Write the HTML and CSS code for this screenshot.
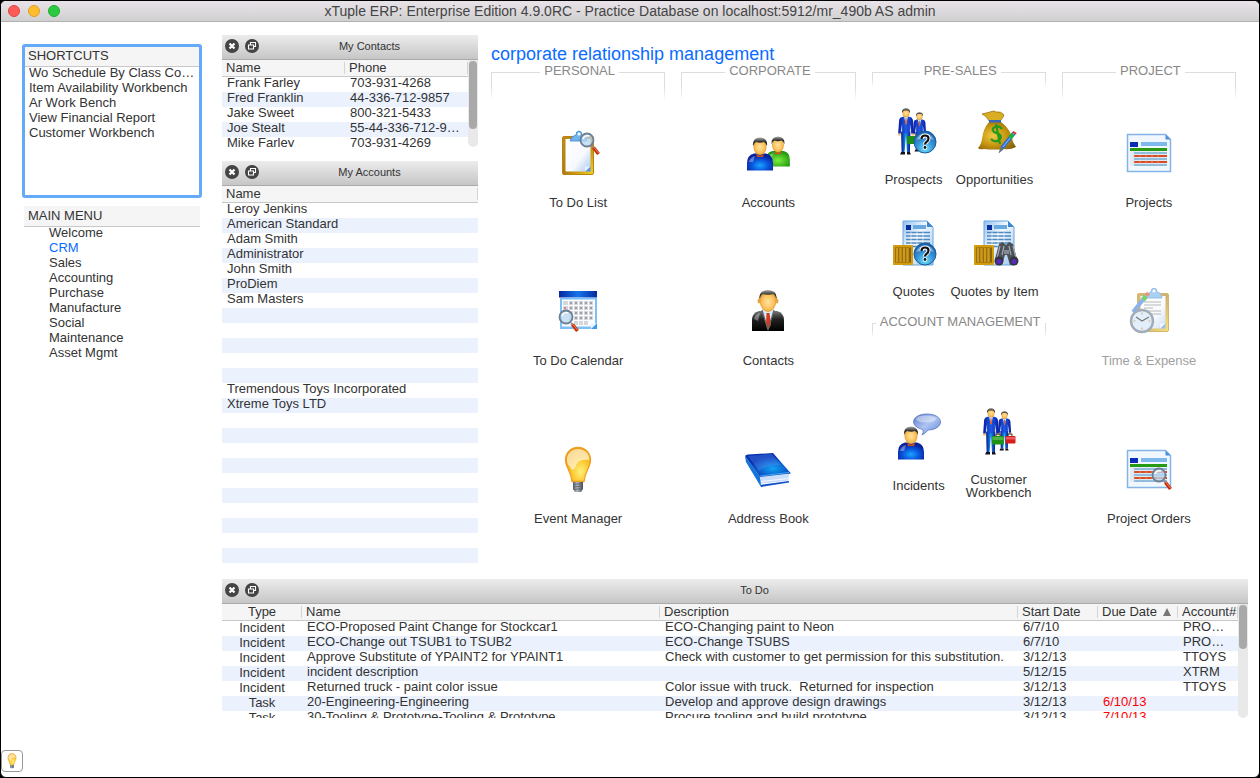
FILE: index.html
```
<!DOCTYPE html>
<html lang="en">
<head>
    <meta charset="UTF-8">
    <meta name="viewport" content="width=device-width, initial-scale=1.0">
    <title>xTuple ERP: Enterprise Edition</title>
    <link rel="stylesheet" href="styles.css">
</head>
<body>
    <!-- Icon sprite -->
    <svg class="sprite" aria-hidden="true">
        <defs>
            <radialGradient id="blue" cx="0.5" cy="0.7" r="0.6">
                <stop offset="0" stop-color="#1aa5ff"/><stop offset="0.5" stop-color="#0a5be0"/><stop offset="1" stop-color="#0a1f9c"/>
            </radialGradient>
            <radialGradient id="green" cx="0.5" cy="0.6" r="0.6">
                <stop offset="0" stop-color="#7af03c"/><stop offset="1" stop-color="#1f9410"/>
            </radialGradient>
            <radialGradient id="skin" cx="0.5" cy="0.5" r="0.6">
                <stop offset="0" stop-color="#ffe3a0"/><stop offset="0.6" stop-color="#fbc25c"/><stop offset="1" stop-color="#cf8018"/>
            </radialGradient>
            <linearGradient id="hair" x1="0" y1="0" x2="0" y2="1">
                <stop offset="0" stop-color="#aaa"/><stop offset="0.5" stop-color="#333"/><stop offset="1" stop-color="#000"/>
            </linearGradient>
            <linearGradient id="gold" x1="0" y1="0" x2="1" y2="1">
                <stop offset="0" stop-color="#c48a18"/><stop offset="0.5" stop-color="#b07c10"/><stop offset="1" stop-color="#f5d21c"/>
            </linearGradient>
            <linearGradient id="paper" x1="0" y1="0" x2="1" y2="1">
                <stop offset="0" stop-color="#fff"/><stop offset="0.6" stop-color="#f6f9ff"/><stop offset="1" stop-color="#a9c6ee"/>
            </linearGradient>
            <linearGradient id="suit" x1="0" y1="0" x2="1" y2="0">
                <stop offset="0" stop-color="#0a1ba0"/><stop offset="0.5" stop-color="#1d5be6"/><stop offset="1" stop-color="#0a1ba0"/>
            </linearGradient>
            <linearGradient id="legs" x1="0" y1="0" x2="1" y2="0">
                <stop offset="0" stop-color="#06128a"/><stop offset="0.5" stop-color="#1597ee"/><stop offset="1" stop-color="#06128a"/>
            </linearGradient>
            <radialGradient id="ball" cx="0.5" cy="0.8" r="0.7">
                <stop offset="0" stop-color="#6fe4fa"/><stop offset="0.5" stop-color="#3a97da"/><stop offset="1" stop-color="#1a64ae"/>
            </radialGradient>
            <radialGradient id="bag" cx="0.4" cy="0.5" r="0.7">
                <stop offset="0" stop-color="#efcb48"/><stop offset="0.5" stop-color="#c8960f"/><stop offset="1" stop-color="#805a08"/>
            </radialGradient>
            <linearGradient id="sheet" x1="0" y1="0" x2="1" y2="1">
                <stop offset="0" stop-color="#8fc0f0"/><stop offset="0.4" stop-color="#f2f8ff"/><stop offset="1" stop-color="#9cc8f2"/>
            </linearGradient>
            <linearGradient id="navy" x1="0" y1="0" x2="1" y2="0">
                <stop offset="0" stop-color="#0628a0"/><stop offset="0.5" stop-color="#1475e8"/><stop offset="1" stop-color="#0628a0"/>
            </linearGradient>
            <linearGradient id="black" x1="0" y1="0" x2="0" y2="1">
                <stop offset="0" stop-color="#777"/><stop offset="0.4" stop-color="#222"/><stop offset="1" stop-color="#000"/>
            </linearGradient>
            <radialGradient id="glow" cx="0.6" cy="0.7" r="0.7">
                <stop offset="0" stop-color="#fff27a"/><stop offset="0.5" stop-color="#fcc62f"/><stop offset="1" stop-color="#ee9708"/>
            </radialGradient>
            <linearGradient id="metal" x1="0" y1="0" x2="1" y2="0">
                <stop offset="0" stop-color="#555b66"/><stop offset="0.4" stop-color="#b5bac4"/><stop offset="1" stop-color="#444a55"/>
            </linearGradient>
            <radialGradient id="cover" cx="0.6" cy="0.65" r="0.5">
                <stop offset="0" stop-color="#11a2f5"/><stop offset="1" stop-color="#0633b0"/>
            </radialGradient>
            <linearGradient id="bubble" x1="0" y1="0" x2="1" y2="1">
                <stop offset="0" stop-color="#5a78c8"/><stop offset="0.5" stop-color="#aec4f2"/><stop offset="1" stop-color="#5f84d8"/>
            </linearGradient>
        </defs>

        <symbol id="magnifier" viewBox="0 0 24 28">
            <path d="M14 15l2 2" stroke="#888" stroke-width="2"/>
            <path d="M15.500 16.500l5 6.500" stroke="#c8300c" stroke-width="3.500"/>
            <path d="M15.500 16l5 6" stroke="#f08050" stroke-width="1"/>
            <circle cx="9" cy="9" r="6.500" fill="#b9d8f2" fill-opacity="0.750" stroke="#6d7f92" stroke-width="1.800"/>
            <path d="M5 8a4.500 4.500 0 0 1 6-3" stroke="#fff" stroke-width="1.500" fill="none"/>
        </symbol>

        <symbol id="bust" viewBox="0 0 26 34">
            <path d="M0 33.500V26q0-8 7-9.500h12q7 1.500 7 9.500v7.500z"/>
            <path d="M9 17q4 3 8 0l-1 3h-6z" fill="#d0501c"/>
            <path d="M2 25q1-5 6-6l-2 6z" fill="#fff" opacity="0.350"/>
            <ellipse cx="13" cy="10" rx="6.500" ry="8" fill="url(#skin)"/>
            <path d="M6 9q-1-8 7-8.500 8 .5 7 8.500-1-3-3-4-4 1.500-8 0-2 1-3 4z" fill="url(#hair)"/>
        </symbol>

        <symbol id="suitman" viewBox="0 0 18 48">
            <path d="M4 24h9.500l-.5 21h-3l-1-17-1.500 17H4.500z" fill="url(#legs)"/>
            <path d="M4 45h4v2.500H3zM10 45h3l1 2.500h-4z" fill="#112"/>
            <path d="M1 26l1-14q.5-2.500 3.500-3h7q3 .5 3.500 3l1 14-2.500.5L13 16v10H5V16l-1.500 10.500z" fill="url(#suit)"/>
            <path d="M7 9h4l-2 8z" fill="#cfeaff"/>
            <path d="M8.500 10.500h1l.5 5-1 1.500-1-1.500z" fill="#e0602a"/>
            <path d="M1 26h2.500v2H1zM14.500 26H17v2h-2.500z" fill="#f2b660"/>
            <ellipse cx="9" cy="5" rx="3.500" ry="4.500" fill="url(#skin)"/>
            <path d="M5 5q-.5-4.500 4-5 4.500.5 4 5l-1.500-2.500h-5z" fill="url(#hair)"/>
        </symbol>

        <symbol id="question" viewBox="0 0 24 24">
            <circle cx="12" cy="12" r="11" fill="url(#ball)" stroke="#1b5c9c" stroke-width="1"/>
            <path d="M3 10a9.500 9.500 0 0 1 18 0q-9-3-18 0z" fill="#fff" opacity="0.350"/>
            <path d="M8.500 9q0-3.500 3.500-3.500t3.500 3q0 2-1.700 3.200t-1.800 2.800" fill="none" stroke="#fff" stroke-width="4"/>
            <path d="M8.500 9q0-3.500 3.500-3.500t3.500 3q0 2-1.700 3.200t-1.800 2.800" fill="none" stroke="#111" stroke-width="2.200"/>
            <circle cx="12" cy="17.500" r="2.200" fill="#fff"/><circle cx="12" cy="17.500" r="1.400" fill="#111"/>
        </symbol>

        <symbol id="clipboard" viewBox="0 0 34 46">
            <rect x="1.500" y="6.500" width="31" height="38" rx="1.500" fill="url(#gold)" stroke="#b98512"/>
            <path d="M4.500 9h25v32.500h-25z" fill="url(#paper)"/>
            <path d="M24 41.500l5.500-5.500v5.500z" fill="#5f92d8"/><path d="M24 41.500v-5h5.500z" fill="#e8f1ff"/>
            <path d="M9 11q1-5 6-6 0-4 3-4t3 4q5 1 5 6z" fill="#6fb4ec" stroke="#3f88cc" stroke-width="0.800"/>
            <circle cx="18" cy="4" r="1.500" fill="#fff"/>
        </symbol>

        <symbol id="bluedoc" viewBox="0 0 32 46">
            <path d="M1 1h24l6 6v38H1z" fill="url(#sheet)" stroke="#6aa5dc"/>
            <path d="M25 1v6h6z" fill="#3d88d0"/>
            <path d="M4 5h5v5H4z" fill="#0a2c9c"/><path d="M11 5h13v4H11z" fill="#6aa8e0"/>
            <path d="M4 12.500h24M4 16h24M4 19.500h24M4 23h24M4 26.500h24" stroke="#4d88bf" stroke-width="1.500"/>
            <path d="M9 12v15M15 12v15M21 12v15" stroke="#fff" stroke-width="0.600"/>
        </symbol>

        <symbol id="crate" viewBox="0 0 20 20">
            <path d="M0 0h20v20H0z" fill="#b07d0a"/>
            <path d="M2 3h16v14H2z" fill="#8a620a"/>
            <path d="M4 3v14M7.500 3v14M11 3v14M14.500 3v14" stroke="#cc9a1c" stroke-width="2.500"/>
            <path d="M0 1h20M1 0v20M19 0v20M0 19h20" stroke="#d9a614" stroke-width="1.600"/>
        </symbol>

        <symbol id="report" viewBox="0 0 46 40">
            <path d="M1.500 1.500h38l5 5v32h-43z" fill="#f1f7ff" stroke="#86b4e6" stroke-width="1.500"/>
            <path d="M39.500 1.500v5h5z" fill="#4a90d8"/>
            <path d="M4 9h8v5H4z" fill="#0a2cb4"/><path d="M15 9h26v4H15z" fill="#7db9ea"/>
            <path d="M4 15h37v3H4z" fill="#279a12"/>
            <path d="M4 18.500h37v14H4z" fill="#e2eaf2"/>
            <path d="M8 20h33M8 26h33M8 32h33" stroke="#8fbbdc" stroke-width="1.800"/>
            <path d="M8 23h33M8 29h33" stroke="#dc4a22" stroke-width="2"/>
            <path d="M8 18v14.500M14 18v14.500M20 18v14.500M26 18v14.500M32 18v14.500" stroke="#c4d0dc" stroke-width="0.500"/>
        </symbol>

        <symbol id="icon-todo" viewBox="0 0 48 48">
            <use href="#clipboard" x="7" y="0" width="34" height="46"/>
            <use href="#magnifier" x="24" y="1" width="24" height="28"/>
        </symbol>
        <symbol id="icon-calendar" viewBox="0 0 48 48">
            <path d="M6 10h37v31H6z" fill="#7cc0f4"/><path d="M8 11.500h33v27H8z" fill="#fafcff"/>
            <path d="M5 3h38v6.500H5z" fill="url(#navy)"/>
            <g fill="#d4d6da"><path d="M9 13h5v4H9zM15 13h4v4h-4zM20 13h4v4h-4zM25 13h4v4h-4zM30 13h4v4h-4zM35 13h4v4h-4zM9 18h5v4H9zM15 18h4v4h-4zM20 18h4v4h-4zM25 18h4v4h-4zM30 18h4v4h-4zM35 18h4v4h-4zM9 23h5v4H9zM15 23h4v4h-4zM20 23h4v4h-4zM25 23h4v4h-4zM30 23h4v4h-4zM35 23h4v4h-4zM15 28h4v4h-4zM20 28h4v4h-4zM25 28h4v4h-4zM30 28h4v4h-4zM35 28h4v4h-4zM20 33h4v4h-4zM25 33h4v4h-4zM30 33h4v4h-4z"/></g>
            <path d="M17 14v2M22 14v2M27 14v2M32 14v2M37 14v2M17 19v2M22 19v2M27 19v2M32 19v2M37 19v2M17 24v2M22 24v2M27 24v2M32 24v2M37 24v2M22 29v2M27 29v2M32 29v2M37 29v2" stroke="#667" stroke-width="1"/>
            <path d="M11 19v2M11 24v2" stroke="#d33" stroke-width="1"/>
            <path d="M37 41l6-6v6z" fill="#3d9ae8"/><path d="M37 41v-5l6-1z" fill="#e6f3ff"/>
            <use href="#magnifier" x="3" y="20" width="24" height="28"/>
        </symbol>
        <symbol id="icon-bulb" viewBox="0 0 48 48">
            <path d="M24 1.500c7.500 0 12.500 5.500 12.500 12.500 0 7-5.500 11-6.500 21.500H18C17 25 11.500 21 11.500 14 11.500 7 16.500 1.500 24 1.500z" fill="url(#glow)" stroke="#eba023" stroke-width="1.300"/>
            <path d="M13 16C12 8 17 3 24 3s12 5 11 11q-12-2-14 8-3 4-5-1-2-2-3-5z" fill="#fff6dc" opacity="0.700"/>
            <path d="M19 36h10v7l-2 3h-6l-2-3z" fill="url(#metal)"/>
            <path d="M19 38.500l10-1M19 41l10-1M19.500 43.500l9-1" stroke="#555b66" stroke-width="0.800"/>
        </symbol>
        <symbol id="icon-accounts" viewBox="0 0 48 48">
            <use href="#bust" x="22" y="6" width="24" height="31" fill="url(#green)"/>
            <use href="#bust" x="3" y="7" width="26" height="34" fill="url(#blue)"/>
        </symbol>
        <symbol id="icon-contact" viewBox="0 0 48 48">
            <path d="M8 43V32q0-7 7-9h18q7 2 7 9v11z" fill="url(#black)"/>
            <path d="M18 22h12l-6 19z" fill="#d8edfa"/>
            <path d="M22.500 25h3l1.500 12-2.500 4-2.500-4z" fill="#d8371c"/>
            <path d="M18 22l6 20M30 22l-6 20" stroke="#666" stroke-width="1.200"/>
            <path d="M10 31q1-5 6-6l-2 8z" fill="#fff" opacity="0.350"/>
            <ellipse cx="15" cy="13" rx="1.500" ry="2.500" fill="#e8a840"/><ellipse cx="33" cy="13" rx="1.500" ry="2.500" fill="#e8a840"/>
            <path d="M15.500 11q0-7 8.500-7t8.500 7q0 6-3 10-2.500 3-5.500 3t-5.500-3q-3-4-3-10z" fill="url(#skin)"/>
            <path d="M15.500 11q-1-8.500 8.500-9 9.500.5 8.500 9-1-4-3-5-5.500 1.500-11 0-2 1-3 5z" fill="url(#hair)"/>
        </symbol>
        <symbol id="icon-book" viewBox="0 0 48 48">
            <path d="M1 10l1 6 15 25 2-1-3-9z" fill="#1273d8"/>
            <path d="M16 31l29-3-1 8-27 4z" fill="#c9dcfb"/>
            <path d="M17 38l28-3M17 35.500l27-3" stroke="#fff" stroke-width="0.800"/>
            <path d="M17 41l28-4.500v-1.500l-28 4z" fill="#0f50c8"/>
            <path d="M1 10q1-1.500 3-1.500L29 7l18 20.500-31 3.500z" fill="url(#cover)"/>
            <path d="M4 10l24-2 9 11q-14 0-22 6z" fill="#7aa4ff" opacity="0.250"/>
            <path d="M16 30l29-3.500" stroke="#56b4f8" stroke-width="0.800"/>
        </symbol>
        <symbol id="icon-prospects" viewBox="0 0 48 48">
            <use href="#suitman" x="22" y="5" width="15" height="40"/>
            <use href="#suitman" x="7" y="1" width="18" height="47"/>
            <rect x="17" y="29" width="12" height="8" rx="1" fill="#1e8a18"/>
            <use href="#question" x="23" y="23" width="24" height="24"/>
        </symbol>
        <symbol id="icon-opportunities" viewBox="0 0 48 48">
            <path d="M18 15h12q10 7 12 20l3 5q-6 3-12 2-10 1-20 0-5 1-6-1 3-3 4-9 1-10 7-17z" fill="url(#bag)"/>
            <path d="M11 7q4-1 8-2 4-2 6 0 5-1 8 3-1 3-4 6H18q-2-5-7-7z" fill="#d9ae22" stroke="#94690a" stroke-width="0.700"/>
            <path d="M18 13h12v2.500H18z" fill="#3a66b8"/>
            <path d="M31 22q-3-4-7-2t-1 5l5 2q4 3 0 6t-8-1M25 17l4 20" fill="none" stroke="#259a1c" stroke-width="2.200"/>
            <path d="M43 26L31 41" stroke="#2f6fd0" stroke-width="4"/>
            <path d="M43 26L32 40" stroke="#8cc0ff" stroke-width="1"/>
            <path d="M42 27l-3 4" stroke="#20b040" stroke-width="4"/><path d="M44 25l-1 1.500" stroke="#e03030" stroke-width="4"/>
            <path d="M29.500 40l3 2.500-5 4z" fill="#6b7078"/>
        </symbol>
        <symbol id="icon-quotes" viewBox="0 0 48 48">
            <use href="#bluedoc" x="12" y="1" width="32" height="46"/>
            <use href="#crate" x="3" y="26" width="20" height="20"/>
            <use href="#question" x="23" y="23" width="24" height="24"/>
        </symbol>
        <symbol id="icon-quotes-item" viewBox="0 0 48 48">
            <use href="#bluedoc" x="12" y="1" width="32" height="46"/>
            <use href="#crate" x="3" y="26" width="20" height="20"/>
            <path d="M28 25l4-2 3 3 3-3 4 2 4 15-2 6h-5l-3-10h-2l-3 10h-5l-2-6z" fill="#4c5158"/>
            <path d="M29 27l-3 12M42 27l3 12M33 27l-2 9M38 27l2 9" stroke="#a5abb5" stroke-width="1.200"/>
            <path d="M33 31h5v4h-5z" fill="#858b95"/>
            <circle cx="28" cy="42" r="4.500" fill="#33363c"/><circle cx="43" cy="42" r="4.500" fill="#33363c"/>
            <circle cx="28" cy="42.500" r="2.500" fill="#5a28c0"/><circle cx="43" cy="42.500" r="2.500" fill="#5a28c0"/>
        </symbol>
        <symbol id="icon-incidents" viewBox="0 0 48 48">
            <path d="M32 1c8 0 13.500 3.500 13.500 8S40 17 33 17q-2 3-6 5 2-3 1-5.500-9-2-9.500-7.500C18.500 4.500 24 1 32 1z" fill="url(#bubble)" stroke="#5474c4" stroke-width="0.800"/>
            <ellipse cx="31" cy="6" rx="10" ry="3.500" fill="#fff" opacity="0.400"/>
            <use href="#bust" x="3" y="13" width="26" height="34" fill="url(#blue)"/>
        </symbol>
        <symbol id="icon-workbench" viewBox="0 0 48 48">
            <use href="#suitman" x="22" y="4" width="15" height="40"/>
            <use href="#suitman" x="7" y="1" width="18" height="47"/>
            <path d="M21 29v-2h4v2M33 29v-2h4v2" fill="none" stroke="#333"/>
            <rect x="17" y="29" width="12" height="8.500" rx="1" fill="#1f9318"/><path d="M17.500 30h11v3h-11z" fill="#7fd070" opacity="0.500"/>
            <rect x="30.500" y="29" width="10" height="7.500" rx="1" fill="#d81c1c"/><path d="M31 30h9v2.500h-9z" fill="#ff9a90" opacity="0.500"/>
        </symbol>
        <symbol id="icon-projects" viewBox="0 0 48 48">
            <use href="#report" x="1" y="3" width="46" height="40"/>
        </symbol>
        <symbol id="icon-orders" viewBox="0 0 48 48">
            <use href="#report" x="1" y="3" width="46" height="40"/>
            <use href="#magnifier" x="25" y="20" width="24" height="28"/>
        </symbol>
        <symbol id="icon-time" viewBox="0 0 48 48">
            <g opacity="0.600">
                <use href="#clipboard" x="11" y="-1" width="34" height="46"/>
                <path d="M19 14h17M19 17h17M19 20h9M19 23h17M19 26h17" stroke="#888" stroke-width="1"/>
                <path d="M21 8L8 24" stroke="#3f7fe0" stroke-width="4"/><path d="M21 8l-3 4" stroke="#28b428" stroke-width="5"/>
                <path d="M23.500 5l-2 2.500" stroke="#e04a30" stroke-width="4"/>
                <circle cx="17" cy="33" r="11" fill="#cfe6fa" stroke="#66788c" stroke-width="2.500"/>
                <path d="M11 29l6 4 7-4" fill="none" stroke="#222" stroke-width="1.300"/>
                <path d="M17 24.500v2M17 39.500v2M8.500 33h2M23.500 33h2" stroke="#c07830" stroke-width="1.200"/>
            </g>
        </symbol>
        <symbol id="dock-close" viewBox="0 0 14 14">
            <circle cx="7" cy="7" r="7" fill="#444"/>
            <path d="M4.500 4.500l5 5M9.500 4.500l-5 5" stroke="#fff" stroke-width="2.200"/>
        </symbol>
        <symbol id="dock-float" viewBox="0 0 14 14">
            <circle cx="7" cy="7" r="7" fill="#444"/>
            <path d="M5.500 5.500v-2h5v4h-2M3.500 6h5v4h-5z" fill="none" stroke="#fff" stroke-width="1.100"/>
        </symbol>
    </svg>

    <header class="titlebar">
        <div class="lights">
            <button class="light close" aria-label="Close"></button>
            <button class="light minimize" aria-label="Minimize"></button>
            <button class="light zoom" aria-label="Zoom"></button>
        </div>
        <span class="window-title">xTuple ERP: Enterprise Edition 4.9.0RC - Practice Database on localhost:5912/mr_490b AS admin</span>
    </header>

    <div class="workspace">
        <aside class="sidebar">
            <nav class="shortcuts">
                <h2>SHORTCUTS</h2>
                <ul>
                    <li><a href="#" class="elide">Wo Schedule By Class Code</a></li>
                    <li><a href="#">Item Availability Workbench</a></li>
                    <li><a href="#">Ar Work Bench</a></li>
                    <li><a href="#">View Financial Report</a></li>
                    <li><a href="#">Customer Workbench</a></li>
                </ul>
            </nav>
            <nav class="main-menu">
                <h2>MAIN MENU</h2>
                <ul>
                    <li><a href="#">Welcome</a></li>
                    <li><a href="#" class="active">CRM</a></li>
                    <li><a href="#">Sales</a></li>
                    <li><a href="#">Accounting</a></li>
                    <li><a href="#">Purchase</a></li>
                    <li><a href="#">Manufacture</a></li>
                    <li><a href="#">Social</a></li>
                    <li><a href="#">Maintenance</a></li>
                    <li><a href="#">Asset Mgmt</a></li>
                </ul>
            </nav>
        </aside>

        <div class="docks">
            <section class="dock contacts">
                <div class="dock-title">
                    <button aria-label="Close"><svg><use href="#dock-close"/></svg></button>
                    <button aria-label="Float"><svg><use href="#dock-float"/></svg></button>
                    <h2>My Contacts</h2>
                </div>
                <div class="dock-body">
                    <div class="list">
                        <table>
                            <thead><tr><th>Name</th><th>Phone</th></tr></thead>
                            <tbody>
                                <tr><td>Frank Farley</td><td>703-931-4268</td></tr>
                                <tr><td>Fred Franklin</td><td>44-336-712-9857</td></tr>
                                <tr><td>Jake Sweet</td><td>800-321-5433</td></tr>
                                <tr><td>Joe Stealt</td><td class="elide">55-44-336-712-9857</td></tr>
                                <tr><td>Mike Farley</td><td>703-931-4269</td></tr>
                            </tbody>
                        </table>
                    </div>
                    <div class="scrollbar"><div class="thumb"></div></div>
                </div>
            </section>

            <section class="dock accounts">
                <div class="dock-title">
                    <button aria-label="Close"><svg><use href="#dock-close"/></svg></button>
                    <button aria-label="Float"><svg><use href="#dock-float"/></svg></button>
                    <h2>My Accounts</h2>
                </div>
                <div class="dock-body">
                    <div class="list">
                        <table>
                            <thead><tr><th>Name</th></tr></thead>
                            <tbody>
                                <tr><td>Leroy Jenkins</td></tr>
                                <tr><td>American Standard</td></tr>
                                <tr><td>Adam Smith</td></tr>
                                <tr><td>Administrator</td></tr>
                                <tr><td>John Smith</td></tr>
                                <tr><td>ProDiem</td></tr>
                                <tr><td>Sam Masters</td></tr>
                                <tr><td></td></tr>
                                <tr><td></td></tr>
                                <tr><td></td></tr>
                                <tr><td></td></tr>
                                <tr><td></td></tr>
                                <tr><td>Tremendous Toys Incorporated</td></tr>
                                <tr><td>Xtreme Toys LTD</td></tr>
                                <tr><td></td></tr>
                                <tr><td></td></tr>
                                <tr><td></td></tr>
                                <tr><td></td></tr>
                                <tr><td></td></tr>
                                <tr><td></td></tr>
                                <tr><td></td></tr>
                                <tr><td></td></tr>
                                <tr><td></td></tr>
                                <tr><td></td></tr>
                            </tbody>
                        </table>
                    </div>
                </div>
            </section>
        </div>

        <main class="crm">
            <h1>corporate relationship management</h1>
            <div class="groups">
                <section class="group">
                    <h3>PERSONAL</h3>
                    <div class="stack">
                        <button class="tile"><svg><use href="#icon-todo"/></svg>To Do List</button>
                        <button class="tile"><svg><use href="#icon-calendar"/></svg>To Do Calendar</button>
                        <button class="tile"><svg><use href="#icon-bulb"/></svg>Event Manager</button>
                    </div>
                </section>
                <section class="group">
                    <h3>CORPORATE</h3>
                    <div class="stack">
                        <button class="tile"><svg><use href="#icon-accounts"/></svg>Accounts</button>
                        <button class="tile"><svg><use href="#icon-contact"/></svg>Contacts</button>
                        <button class="tile"><svg><use href="#icon-book"/></svg>Address Book</button>
                    </div>
                </section>
                <div class="group-column">
                    <section class="group short">
                        <h3>PRE-SALES</h3>
                        <div class="pairs">
                            <button class="tile"><svg><use href="#icon-prospects"/></svg>Prospects</button>
                            <button class="tile"><svg><use href="#icon-opportunities"/></svg>Opportunities</button>
                            <button class="tile"><svg><use href="#icon-quotes"/></svg>Quotes</button>
                            <button class="tile"><svg><use href="#icon-quotes-item"/></svg>Quotes by Item</button>
                        </div>
                    </section>
                    <section class="group short management">
                        <h3>ACCOUNT MANAGEMENT</h3>
                        <div class="pairs even">
                            <button class="tile"><svg><use href="#icon-incidents"/></svg>Incidents</button>
                            <button class="tile"><svg><use href="#icon-workbench"/></svg>Customer<br>Workbench</button>
                        </div>
                    </section>
                </div>
                <section class="group">
                    <h3>PROJECT</h3>
                    <div class="stack">
                        <button class="tile"><svg><use href="#icon-projects"/></svg>Projects</button>
                        <button class="tile" disabled><svg><use href="#icon-time"/></svg>Time &amp; Expense</button>
                        <button class="tile"><svg><use href="#icon-orders"/></svg>Project Orders</button>
                    </div>
                </section>
            </div>
        </main>

        <section class="dock todo">
            <div class="dock-title">
                <button aria-label="Close"><svg><use href="#dock-close"/></svg></button>
                <button aria-label="Float"><svg><use href="#dock-float"/></svg></button>
                <h2>To Do</h2>
            </div>
            <div class="dock-body">
                <div class="list">
                    <table>
                        <thead>
                            <tr>
                                <th class="type">Type</th>
                                <th>Name</th>
                                <th>Description</th>
                                <th class="date">Start Date</th>
                                <th class="date">Due Date <span class="sort"></span></th>
                                <th class="account">Account#</th>
                            </tr>
                        </thead>
                        <tbody>
                            <tr><td class="type">Incident</td><td>ECO-Proposed Paint Change for Stockcar1</td><td>ECO-Changing paint to Neon</td><td>6/7/10</td><td></td><td class="elide">PRODIEM</td></tr>
                            <tr><td class="type">Incident</td><td>ECO-Change out TSUB1 to TSUB2</td><td>ECO-Change TSUBS</td><td>6/7/10</td><td></td><td class="elide">PRODIEM</td></tr>
                            <tr><td class="type">Incident</td><td>Approve Substitute of YPAINT2 for YPAINT1</td><td>Check with customer to get permission for this substitution.</td><td>3/12/13</td><td></td><td>TTOYS</td></tr>
                            <tr><td class="type">Incident</td><td>incident description</td><td></td><td>5/12/15</td><td></td><td>XTRM</td></tr>
                            <tr><td class="type">Incident</td><td>Returned truck - paint color issue</td><td>Color issue with truck.&nbsp; Returned for inspection</td><td>3/12/13</td><td></td><td>TTOYS</td></tr>
                            <tr><td class="type">Task</td><td>20-Engineering-Engineering</td><td>Develop and approve design drawings</td><td>3/12/13</td><td class="overdue">6/10/13</td><td></td></tr>
                            <tr><td class="type">Task</td><td>30-Tooling &amp; Prototype-Tooling &amp; Prototype</td><td>Procure tooling and build prototype</td><td>3/12/13</td><td class="overdue">7/10/13</td><td></td></tr>
                        </tbody>
                    </table>
                </div>
                <div class="scrollbar"><div class="thumb"></div></div>
            </div>
        </section>
    </div>

    <footer class="statusbar">
        <button aria-label="Events"><svg><use href="#icon-bulb"/></svg></button>
    </footer>
</body>
</html>
```
FILE: styles.css
```
* {
    box-sizing: border-box;
}

html {
    background: #000;
}

body {
    margin: 0;
    min-height: 100vh;
    display: flex;
    flex-direction: column;
    border: 1px solid #000;
    border-radius: 6px;
    background: #fff;
    color: #333;
    font-family: "Liberation Sans", Arial, Helvetica, sans-serif;
    font-size: 13px;
    overflow: hidden;
}

h1, h2, h3, ul {
    margin: 0;
    padding: 0;
    font-weight: normal;
    list-style: none;
}

button {
    padding: 0;
    border: none;
    background: none;
    color: inherit;
    font: inherit;
}

a {
    color: inherit;
    text-decoration: none;
}

.elide {
    overflow-x: clip;
    text-overflow: ellipsis;
}

.sprite {
    position: absolute;
    width: 0;
    height: 0;
}

/* Title bar */
.titlebar {
    display: flex;
    align-items: center;
    height: 21px;
    padding: 0 7px;
    border-bottom: 1px solid #b0b0b0;
    background: linear-gradient(#e9e3e9, #d0d0d0);
}

.lights {
    display: flex;
    gap: 8px;
}

.light {
    width: 12px;
    height: 12px;
    border-radius: 50%;
}

.close {
    background: #fc5b57;
    border: 1px solid #e2443f;
}

.minimize {
    background: #fdbd2f;
    border: 1px solid #e0a023;
}

.zoom {
    background: #2bca42;
    border: 1px solid #1dad2d;
}

.window-title {
    flex: 1;
    margin-right: 52px;
    text-align: center;
    color: #444;
    font-size: 14px;
    line-height: 20px;
    white-space: nowrap;
}

.workspace {
    display: grid;
    grid-template-columns: 180px 256px 1fr;
    column-gap: 20px;
    row-gap: 15px;
    padding: 13px 11px 0 21px;
}

/* Sidebar */
.sidebar {
    grid-row: 1 / 3;
    padding-top: 9px;
}

.sidebar h2 {
    height: 20px;
    padding-left: 3px;
    border-bottom: 1px solid #c8c8c8;
    background: #f5f5f5;
    font-size: 13px;
    line-height: 18px;
}

.shortcuts {
    min-height: 154px;
    margin-bottom: 8px;
    border: 3px solid #63abf8;
    border-radius: 3px;
}

.shortcuts ul {
    padding: 0 4px;
}

.main-menu {
    margin: 0 2px;
}

.main-menu h2 {
    height: 21px;
    padding-left: 4px;
    line-height: 20px;
}

.main-menu ul {
    padding-left: 25px;
}

.sidebar li {
    height: 15px;
    line-height: 12px;
}

.sidebar a {
    display: block;
    height: 15px;
    white-space: nowrap;
}

.sidebar .active {
    color: #0a6cff;
}

/* Docks */
.docks {
    display: flex;
    flex-direction: column;
    gap: 14px;
}

.dock-title {
    display: flex;
    align-items: center;
    gap: 6px;
    height: 25px;
    padding: 0 3px 2px;
    border-bottom: 1px solid #aaa;
    background: linear-gradient(#ececec, #c6c6c6);
}

.dock-title button,
.dock-title svg {
    display: block;
    width: 14px;
    height: 14px;
}

.dock-title h2 {
    flex: 1;
    margin-right: 1px;
    font-size: 11px;
    text-align: center;
}

.dock-body {
    display: flex;
}

.list {
    flex: 1;
    min-width: 0;
    overflow: hidden;
}

.contacts .list {
    height: 87px;
}

.todo .list {
    height: 114px;
}

table {
    width: 100%;
    table-layout: fixed;
    border-collapse: separate;
    border-spacing: 0;
}

th {
    height: 17px;
    padding: 0 4px;
    border-bottom: 1px solid #c8c8c8;
    background: linear-gradient(#d4d4d4, #d4d4d4) no-repeat right 2px / 1px 12px #f5f5f5;
    font-weight: normal;
    text-align: left;
    line-height: 16px;
    white-space: nowrap;
}

td {
    height: 15px;
    padding: 0 4px 3px 5px;
    line-height: 12px;
    white-space: nowrap;
}

tbody tr:nth-child(even) {
    background: #ebf2fe;
}

.scrollbar {
    width: 10px;
    padding: 1px;
    border-radius: 0 0 5px 5px;
    background: #e9e9e9;
}

.thumb {
    height: 68px;
    border-radius: 4px;
    background: #a9a9a9;
}

.todo {
    grid-column: 2 / 4;
}

.todo .thumb {
    height: 44px;
}

.todo th {
    padding-right: 0;
}

.todo td:last-child {
    padding-right: 10px;
}

.type {
    width: 80px;
}

th.type,
td.type {
    padding-left: 0;
    padding-right: 0;
    text-align: center;
}

td.type {
    line-height: 14px;
    padding-bottom: 1px;
}

.date {
    width: 80px;
}

.account {
    width: 60px;
}

.overdue {
    color: #f00;
}

.sort {
    display: inline-block;
    margin-left: 2px;
    border: 4px solid transparent;
    border-top: none;
    border-bottom: 8px solid #777;
}

/* CRM desktop */
.crm {
    padding: 10px 12px 0 0;
    margin-left: -7px;
}

.crm h1 {
    color: #0a6cff;
    font-size: 18px;
    line-height: 18px;
}

.groups {
    display: grid;
    grid-template-columns: repeat(4, minmax(0, 1fr));
    column-gap: 16px;
}

.group h3 {
    display: flex;
    gap: 4px;
    height: 27px;
    color: #888;
    font-size: 13px;
    line-height: 16px;
    white-space: nowrap;
}

/* bracket lines that fade out on both sides of the heading */
.group h3::before,
.group h3::after {
    content: "";
    flex: 1;
    height: 28px;
    margin-top: 9px;
    border-top: 1px solid #ddd;
    -webkit-mask-image: linear-gradient(#000 50%, transparent);
    mask-image: linear-gradient(#000 50%, transparent);
}

.group h3::before {
    padding-right: 3px;
    border-left: 1px solid #ddd;
}

.group h3::after {
    border-right: 1px solid #ddd;
}

.short h3::before,
.short h3::after {
    height: 14px;
}

.stack {
    display: grid;
    grid-template-rows: repeat(3, 158px);
    justify-items: center;
    align-items: center;
}

.group-column {
    display: flex;
    flex-direction: column;
}

.management {
    flex: 1;
    display: flex;
    flex-direction: column;
}

.pairs {
    display: grid;
    grid-template-columns: auto auto;
    grid-auto-rows: 112px;
    column-gap: 8px;
    justify-content: center;
    align-items: center;
    padding-left: 6px;
}

.pairs.even {
    flex: 1;
    grid-template-columns: 80px 80px;
    grid-auto-rows: auto;
    column-gap: 0;
    padding-left: 0;
}

.tile {
    display: flex;
    flex-direction: column;
    align-items: center;
    line-height: 13px;
    white-space: nowrap;
}

.tile svg {
    width: 48px;
    height: 48px;
    margin-bottom: 18px;
}

.tile:disabled {
    color: #a0a0a0;
}

.statusbar {
    margin-top: auto;
    padding: 0 0 5px;
}

.statusbar button {
    display: flex;
    align-items: center;
    justify-content: center;
    width: 22px;
    height: 22px;
    border: 1px solid #999;
    border-radius: 4px;
}

.statusbar svg {
    width: 16px;
    height: 16px;
}
```
